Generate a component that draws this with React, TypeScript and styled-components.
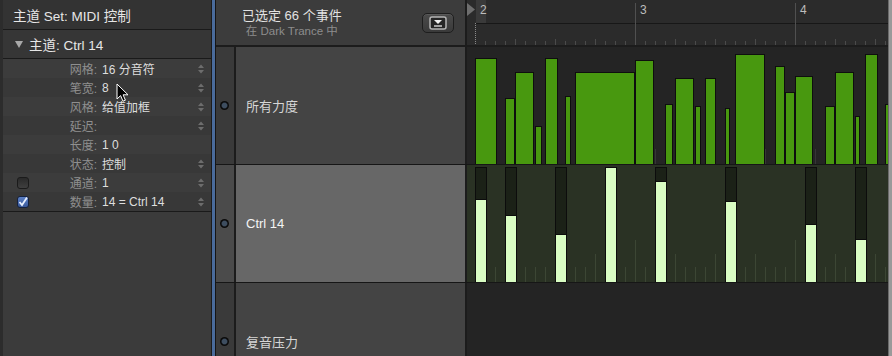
import React from 'react'
import styled, { createGlobalStyle } from 'styled-components'

const GlobalStyle = createGlobalStyle`
  *, *::before, *::after { box-sizing: border-box; }
  html, body { margin: 0; padding: 0; background: #2a2a2a; }
  body { font-family: "Liberation Sans", "Noto Sans CJK SC", sans-serif; }
`

const Window = styled.div`
  display: flex;
  width: 892px;
  height: 356px;
  overflow: hidden;
  background: #3b3b3b;
`

/* ---------- inspector ---------- */

const Inspector = styled.div`
  position: relative;
  width: 212px;
  flex-shrink: 0;
  display: flex;
  flex-direction: column;
  background: #3b3b3b;
  border-left: 3px solid #2c2c2c;
  border-right: 1px solid #1c1c1c;
`

const TitleRow = styled.div`
  height: 30px;
  display: flex;
  align-items: center;
  padding-left: 10px;
  background: #333;
  border-bottom: 1px solid #1a1a1a;
  color: #e6e6e6;
  font-size: 13.5px;
`

const RegionRow = styled.div`
  height: 29px;
  display: flex;
  align-items: center;
  gap: 6px;
  padding-left: 12px;
  background: #363636;
  border-bottom: 1px solid #1a1a1a;
  color: #e6e6e6;
  font-size: 13.5px;
`

const ParamList = styled.div`
  display: flex;
  flex-direction: column;
  border-bottom: 1px solid #1a1a1a;
`

const ParamRow = styled.div<{ $odd: boolean }>`
  height: 19px;
  display: grid;
  grid-template-columns: 57px 37px 1fr 10px;
  align-items: center;
  padding-right: 5px;
  background: ${(p) => (p.$odd ? '#383838' : '#3c3c3c')};
  font-size: 12px;
`

const CheckCell = styled.div`
  display: flex;
  align-items: center;
  padding-left: 14px;
`

const CheckBox = styled.div<{ $checked?: boolean }>`
  width: 12px;
  height: 12px;
  border-radius: 3px;
  display: flex;
  align-items: center;
  justify-content: center;
  border: 1px solid ${(p) => (p.$checked ? '#15223f' : '#1b1b1b')};
  background: ${(p) =>
    p.$checked
      ? 'linear-gradient(#5b7fc4, #3a5a9c)'
      : 'linear-gradient(#2a2a2a, #3f3f3f)'};
`

const ParamLabel = styled.div`
  text-align: right;
  color: #8f8f8f;
  white-space: nowrap;
`

const ParamValue = styled.div`
  padding-left: 5px;
  color: #dedede;
  white-space: nowrap;
`

const StepperCell = styled.div`
  display: flex;
  align-items: center;
  justify-content: center;
`

const Cursor = styled.svg`
  position: absolute;
  left: 113px;
  top: 83px;
`

/* ---------- divider ---------- */

const Divider = styled.div`
  width: 4px;
  flex-shrink: 0;
  background: #4a6b9b;
  border-right: 1px solid #151515;
`

/* ---------- arrange side ---------- */

const Main = styled.div`
  flex: 1;
  display: flex;
  flex-direction: column;
  min-width: 0;
`

const HeaderRow = styled.div`
  height: 47px;
  flex-shrink: 0;
  display: flex;
  border-bottom: 2px solid #1c1c1c;
`

const InfoHeader = styled.div`
  width: 251px;
  flex-shrink: 0;
  display: flex;
  align-items: center;
  background: #3c3c3c;
  border-right: 2px solid #1c1c1c;
`

const InfoText = styled.div`
  display: flex;
  flex-direction: column;
  align-items: center;
  margin-left: 26px;
`

const Selected = styled.div`
  color: #e2e2e2;
  font-size: 13px;
  line-height: 16px;
`

const Context = styled.div`
  color: #8d8d8d;
  font-size: 11.5px;
  line-height: 14px;
`

const MenuButton = styled.div`
  width: 32px;
  height: 20px;
  margin-left: auto;
  margin-right: 11px;
  border-radius: 5px;
  display: flex;
  align-items: center;
  justify-content: center;
  border: 1px solid #1e1e1e;
  background: linear-gradient(#4b4b4b, #3a3a3a);
  box-shadow: inset 0 1px 0 rgba(255, 255, 255, 0.08);
`

const Ruler = styled.div`
  flex: 1;
  background: #2b2b2b;
  svg { display: block; }
`

const Lane = styled.div`
  height: 118px;
  flex-shrink: 0;
  display: flex;
  border-bottom: 1px solid #161616;
`

const DotCell = styled.div<{ $selected?: boolean }>`
  width: 20px;
  flex-shrink: 0;
  display: flex;
  align-items: center;
  justify-content: center;
  padding-right: 2px;
  background: ${(p) => (p.$selected ? '#4b4b4b' : '#3a3a3a')};
  border-right: 2px solid #1c1c1c;
`

const Dot = styled.div`
  width: 9px;
  height: 9px;
  border-radius: 50%;
  background: radial-gradient(circle, #3e4e60 0 35%, #0a0a0a 55%);
`

const NameCell = styled.div<{ $selected?: boolean }>`
  width: 231px;
  flex-shrink: 0;
  display: flex;
  align-items: center;
  padding-left: 10px;
  font-size: 13px;
  color: ${(p) => (p.$selected ? '#f4f4f4' : '#d6d6d6')};
  background: ${(p) => (p.$selected ? '#676767' : '#444')};
  border-right: 2px solid #1c1c1c;
`

const Track = styled.div<{ $tint: string }>`
  flex: 1;
  background: ${(p) => p.$tint};
  svg { display: block; }
`

const RightEdge = styled.div`
  width: 4px;
  flex-shrink: 0;
  background: #9a9a9a;
  border-left: 1px solid #6a6a6a;
`

/* ---------- data ---------- */

const params = [
  { label: '网格', value: '16 分音符', stepper: true },
  { label: '笔宽', value: '8', stepper: true },
  { label: '风格', value: '给值加框', stepper: true },
  { label: '延迟', value: '', stepper: true },
  { label: '长度', value: '1 0', stepper: false },
  { label: '状态', value: '控制', stepper: true },
  { label: '通道', value: '1', stepper: true, check: 'off' },
  { label: '数量', value: '14 = Ctrl 14', stepper: true, check: 'on' },
]

const TRACK_X = 467
const TRACK_W = 421

// [x, width, top] in page pixels, top relative to the lane
const velocities: [number, number, number][] = [
  [475, 22, 11], [505, 10, 51], [515, 19, 25], [535, 7, 79], [545, 13, 11],
  [565, 6, 49], [575, 60, 25], [635, 19, 13], [665, 8, 57], [675, 19, 31],
  [695, 6, 59], [705, 11, 31], [725, 5, 61], [735, 30, 7], [775, 10, 19],
  [785, 10, 45], [795, 18, 29], [825, 10, 59], [835, 19, 25], [855, 5, 69],
  [865, 13, 7], [885, 10, 57],
]

const ctrlEvents: [number, number][] = [
  [475, 34], [505, 50], [555, 69], [605, 2], [655, 16], [725, 36], [805, 59], [855, 74],
]

const ticks = Array.from({ length: 42 }, (_, k) => 8 + k * 10)
const kind = (k: number) => (k % 16 === 0 ? 'bar' : k % 4 === 0 ? 'beat' : 'step')

/* ---------- drawings ---------- */

function Stepper() {
  return (
    <svg width="6" height="10" viewBox="0 0 6 10">
      <polygon points="0,4 3,0.5 6,4" fill="#6d6d6d" />
      <polygon points="0,6 3,9.5 6,6" fill="#6d6d6d" />
    </svg>
  )
}

function Check() {
  return (
    <svg width="10" height="10" viewBox="0 0 10 10">
      <path d="M1.5 5 L4 8 L9 0.5" fill="none" stroke="#e8f0ff" strokeWidth="1.8" />
    </svg>
  )
}

function RulerDrawing() {
  return (
    <svg width={TRACK_W} height="45">
      <polygon points="0,3 8,9.5 0,16" fill="#6e6e6e" />
      <rect x="9" y="0" width="10" height="23" fill="#3a3a3a" />
      <line x1="9" y1="23.5" x2={TRACK_W} y2="23.5" stroke="#171717" />
      <line x1="8.5" y1="23" x2="8.5" y2="45" stroke="#8a8a8a" strokeDasharray="1 1" />
      {ticks.map((x, k) =>
        k === 0 ? null : kind(k) === 'bar' ? (
          <line key={x} x1={x + 0.5} y1="3" x2={x + 0.5} y2="45" stroke="#505050" />
        ) : (
          <line key={x} x1={x + 0.5} y1={kind(k) === 'beat' ? 39 : 41} x2={x + 0.5} y2="45" stroke="#4a4a4a" />
        )
      )}
      {['2', '3', '4'].map((n, i) => (
        <text key={n} x={13 + i * 160} y="13.5" fontSize="12" fill="#bdbdbd" fontFamily="Liberation Sans, sans-serif">
          {n}
        </text>
      ))}
    </svg>
  )
}

function VelocityDrawing() {
  return (
    <svg width={TRACK_W} height="117">
      {ticks.map((x) => (
        <line key={x} x1={x + 0.5} y1="102" x2={x + 0.5} y2="117" stroke="#363636" />
      ))}
      {velocities.map(([x, w, top]) => (
        <rect
          key={x}
          x={x - TRACK_X + 0.5}
          y={top + 0.5}
          width={w - 1}
          height={117 - top}
          fill="#48980f"
          stroke="#0e0e0e"
        />
      ))}
    </svg>
  )
}

function ControllerDrawing() {
  return (
    <svg width={TRACK_W} height="117">
      {ticks.map((x, k) => (
        <line
          key={x}
          x1={x + 0.5}
          y1={kind(k) === 'bar' ? 75 : kind(k) === 'beat' ? 89 : 102}
          x2={x + 0.5}
          y2="117"
          stroke="#3c4634"
        />
      ))}
      {ctrlEvents.map(([x, top]) => {
        const rx = x - TRACK_X
        return (
          <g key={x}>
            <rect x={rx + 0.5} y="2.5" width="11" height="116" fill="#1b2117" stroke="#0c0c0c" />
            <rect x={rx + 1} y={top} width="10" height={117 - top} fill="#d9fdc3" />
            <line x1={rx} y1={top + 0.5} x2={rx + 12} y2={top + 0.5} stroke="#0c0c0c" />
          </g>
        )
      })}
    </svg>
  )
}

/* ---------- app ---------- */

export default function App() {
  return (
    <>
      <GlobalStyle />
      <Window>
        <Inspector>
          <TitleRow>主道 Set: MIDI 控制</TitleRow>
          <RegionRow>
            <svg width="8" height="7" viewBox="0 0 8 7">
              <polygon points="0,0 8,0 4,7" fill="#a9a9a9" />
            </svg>
            主道: Ctrl 14
          </RegionRow>
          <ParamList>
            {params.map((p, i) => (
              <ParamRow key={p.label} $odd={i % 2 === 1}>
                <CheckCell>
                  {p.check && (
                    <CheckBox $checked={p.check === 'on'}>{p.check === 'on' && <Check />}</CheckBox>
                  )}
                </CheckCell>
                <ParamLabel>{p.label}:</ParamLabel>
                <ParamValue>{p.value}</ParamValue>
                <StepperCell>{p.stepper && <Stepper />}</StepperCell>
              </ParamRow>
            ))}
          </ParamList>
          <Cursor width="14" height="20" viewBox="0 0 14 20">
            <path
              d="M1 1 L1 16 L4.6 12.6 L7 18.2 L9.4 17.2 L7.1 11.8 L12 11.8 Z"
              fill="#000"
              stroke="#fff"
              strokeWidth="1"
              strokeLinejoin="round"
            />
          </Cursor>
        </Inspector>

        <Divider />

        <Main>
          <HeaderRow>
            <InfoHeader>
              <InfoText>
                <Selected>已选定 66 个事件</Selected>
                <Context>在 Dark Trance 中</Context>
              </InfoText>
              <MenuButton>
                <svg width="18" height="14" viewBox="0 0 18 14">
                  <rect x="1" y="1" width="16" height="12" rx="2" fill="#262626" stroke="#b4b4b4" strokeWidth="1.5" />
                  <polygon points="5,4 13,4 9,8" fill="#f0f0f0" />
                  <line x1="5" y1="10" x2="13" y2="10" stroke="#cfcfcf" strokeWidth="1.5" />
                </svg>
              </MenuButton>
            </InfoHeader>
            <Ruler>
              <RulerDrawing />
            </Ruler>
          </HeaderRow>

          <Lane>
            <DotCell><Dot /></DotCell>
            <NameCell>所有力度</NameCell>
            <Track $tint="#242424"><VelocityDrawing /></Track>
          </Lane>

          <Lane>
            <DotCell $selected><Dot /></DotCell>
            <NameCell $selected>Ctrl 14</NameCell>
            <Track $tint="#2a3224"><ControllerDrawing /></Track>
          </Lane>

          <Lane>
            <DotCell><Dot /></DotCell>
            <NameCell>复音压力</NameCell>
            <Track $tint="#242424" />
          </Lane>
        </Main>

        <RightEdge />
      </Window>
    </>
  )
}
